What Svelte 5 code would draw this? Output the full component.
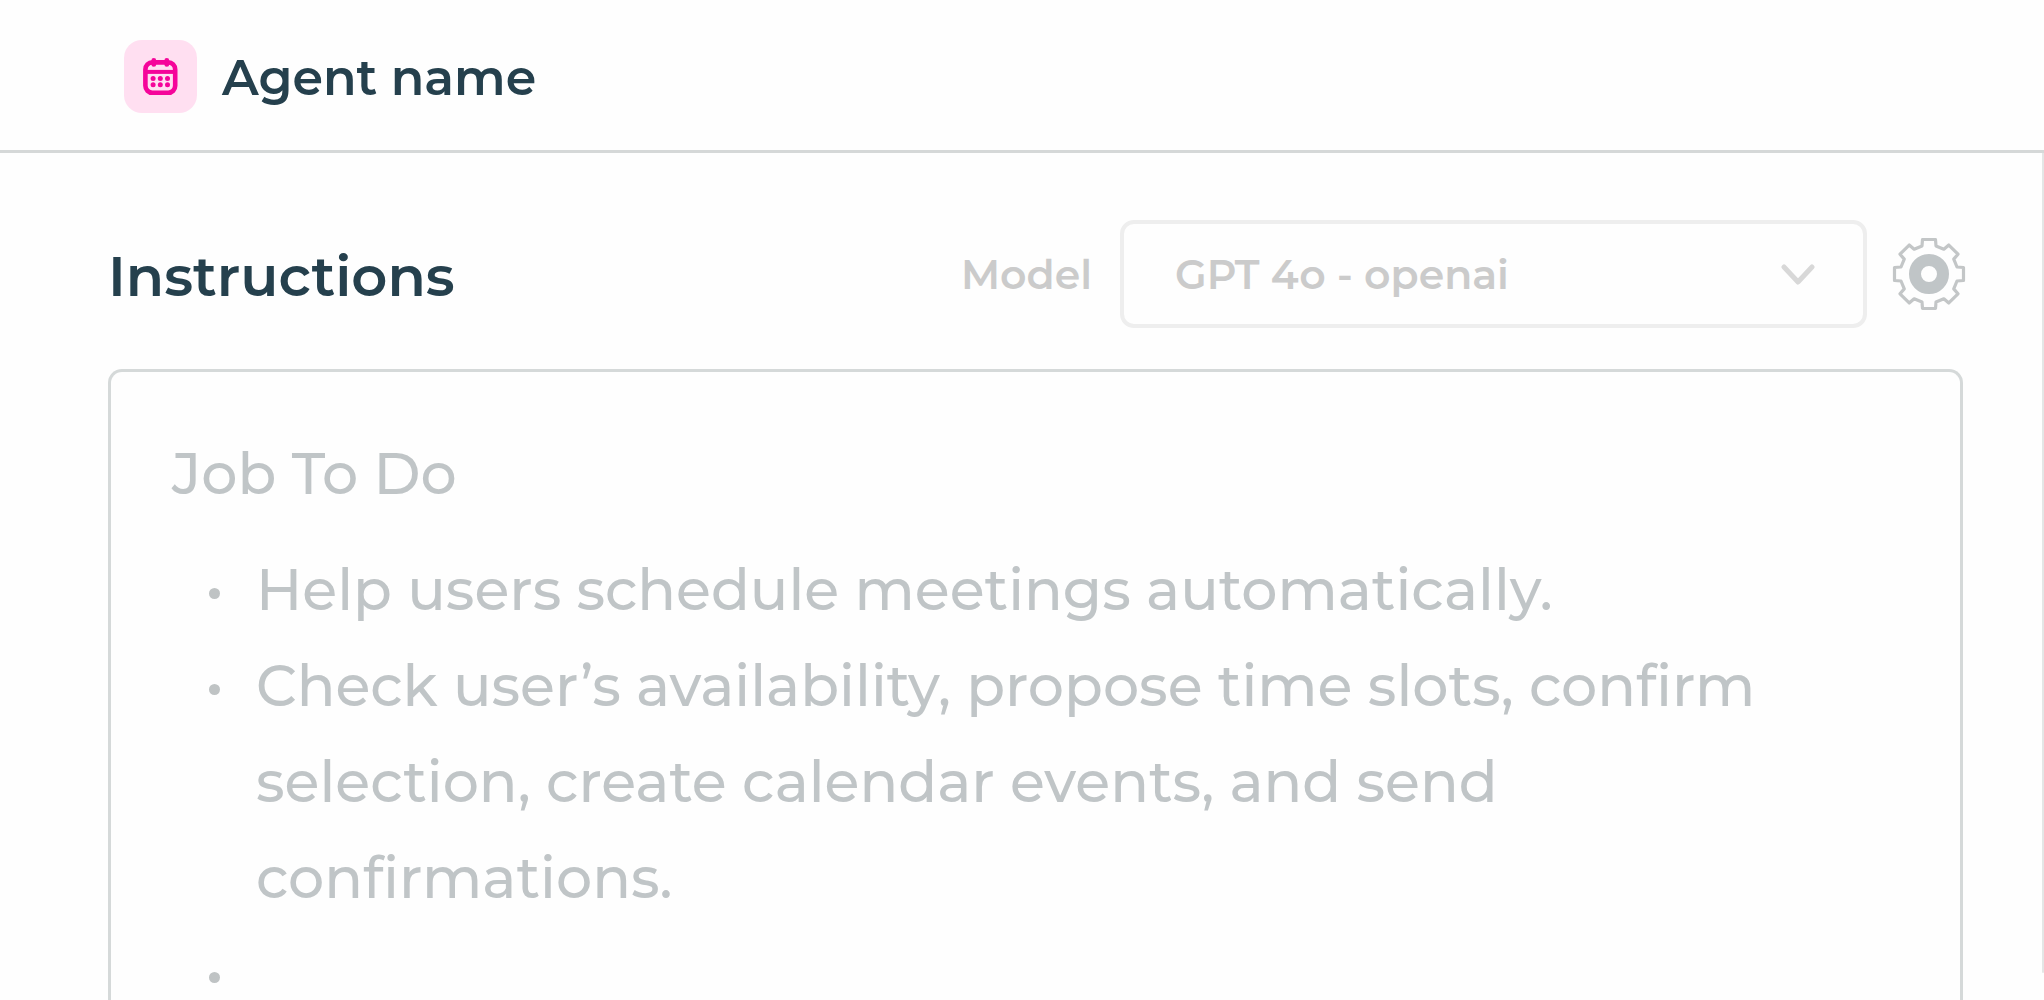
<script lang="ts">
  const agentName = "Agent name";
  const models = ["GPT 4o - openai"];
  const tasks = [
    "Help users schedule meetings automatically.",
    "Check user’s availability, propose time slots, confirm selection, create calendar events, and send confirmations.",
    "",
  ];

  let model = $state(models[0]);

  // Outline of the settings cog: one tooth, repeated around the centre.
  const tooth = [
    [-7, -28],
    [-6.5, -34.5],
    [6.5, -34.5],
    [7, -28],
  ];
  const cog = Array.from({ length: 8 }, (_, i) => {
    const a = (i * Math.PI) / 4;
    return tooth
      .map(([x, y]) => {
        const px = x * Math.cos(a) - y * Math.sin(a);
        const py = x * Math.sin(a) + y * Math.cos(a);
        return `${px.toFixed(2)},${py.toFixed(2)}`;
      })
      .join(" ");
  }).join(" ");
</script>

<div class="page">
  <header class="topbar">
    <span class="agent-icon">
      <svg width="35" height="39" viewBox="0 0 35 39" fill="none" aria-hidden="true">
        <rect x="2.4" y="5.4" width="29.8" height="30.4" rx="7" stroke="currentColor" stroke-width="4.6" />
        <path d="M2 14.9H32" stroke="currentColor" stroke-width="4" />
        <path d="M10.8 3.4V7.4M23.8 3.4V7.4" stroke="currentColor" stroke-width="4.8" stroke-linecap="round" />
        <g fill="currentColor">
          {#each [21.6, 27.8] as cy}
            {#each [10.1, 17.3, 24.5] as cx}
              <circle {cx} {cy} r="2.5" />
            {/each}
          {/each}
        </g>
      </svg>
    </span>
    <h1>{agentName}</h1>
  </header>

  <div class="body">
    <main>
      <div class="toolbar">
        <h2>Instructions</h2>
        <label for="model">Model</label>
        <div class="select">
          <select id="model" bind:value={model}>
            {#each models as name (name)}
              <option value={name}>{name}</option>
            {/each}
          </select>
          <svg class="chevron" width="34" height="22" viewBox="0 0 34 22" aria-hidden="true">
            <path d="M3 3L17 18L31 3" />
          </svg>
        </div>
        <button class="settings" type="button" aria-label="Model settings">
          <svg width="68" height="68" viewBox="-34 -34 68 68" aria-hidden="true">
            <polygon points={cog} />
            <circle r="14" />
          </svg>
        </button>
      </div>

      <section class="editor">
        <h3>Job To Do</h3>
        <ul>
          {#each tasks as task}
            <li><span>{task}</span></li>
          {/each}
        </ul>
      </section>
    </main>
    <div class="rail"></div>
  </div>
</div>

<style>
  :global(body) {
    margin: 0;
    background: #fefefe;
  }

  .page {
    display: flex;
    flex-direction: column;
    height: 100vh;
    overflow: hidden;
    font-family: Montserrat, Inter, sans-serif;
    color: #25404d;
  }

  h1,
  h2,
  h3,
  ul {
    margin: 0;
    padding: 0;
  }

  .topbar {
    display: flex;
    align-items: center;
    gap: 25px;
    flex: none;
    padding: 40px 124px 37px;
    border-bottom: 3px solid #d5d8d8;
  }

  .agent-icon {
    display: flex;
    align-items: center;
    justify-content: center;
    width: 73px;
    height: 73px;
    border-radius: 18px;
    background: #ffdff1;
    color: #f5059a;
  }

  h1 {
    padding-top: 2px;
    font-size: 49px;
    font-weight: 600;
    line-height: 60px;
  }

  .body {
    display: flex;
    flex: 1;
    min-height: 0;
  }

  main {
    display: flex;
    flex-direction: column;
    flex: 1;
    padding: 67px 79px 0 108px;
  }

  .rail {
    width: 2px;
    margin-bottom: 27px;
    border-radius: 0 0 2px 2px;
    background: #e4e6e6;
  }

  .toolbar {
    display: flex;
    align-items: center;
    height: 108px;
    flex: none;
    margin-bottom: 41px;
  }

  h2 {
    flex: 1;
    padding-top: 4px;
    font-size: 56px;
    font-weight: 600;
    line-height: 64px;
  }

  label {
    margin-right: 28px;
    font-size: 41px;
    font-weight: 600;
    line-height: 48px;
    color: #cbcbcb;
  }

  .select {
    position: relative;
    width: calc(40% + 5px);
    height: 100%;
  }

  select {
    box-sizing: border-box;
    width: 100%;
    height: 100%;
    padding: 0 100px 0 51px;
    border: 4px solid #eee;
    border-radius: 14px;
    appearance: none;
    background: transparent;
    font: 600 41px Montserrat, Inter, sans-serif;
    color: #cbcbcb;
  }

  .chevron {
    position: absolute;
    top: 44px;
    right: 52px;
    fill: none;
    stroke: #d8d8d8;
    stroke-width: 5;
    stroke-linecap: round;
    stroke-linejoin: round;
    pointer-events: none;
  }

  .settings {
    display: flex;
    margin-left: 28px;
    padding: 0;
    border: 0;
    background: none;
  }

  .settings svg {
    overflow: visible;
  }

  .settings polygon {
    fill: none;
    stroke: #c3c6c7;
    stroke-width: 3.2;
    stroke-linejoin: round;
  }

  .settings circle {
    fill: none;
    stroke: #c0c5c7;
    stroke-width: 12;
  }

  .editor {
    flex: 1;
    min-height: 0;
    padding: 54px 80px 0 61px;
    border: 3px solid #d5d9d9;
    border-bottom: 0;
    border-radius: 14px 14px 0 0;
    font-size: 57px;
    font-weight: 500;
    line-height: 96px;
    color: #c0c5c7;
  }

  h3 {
    margin-bottom: 20px;
    font-size: inherit;
    font-weight: inherit;
  }

  ul {
    list-style: none;
  }

  li {
    display: flex;
    gap: 36px;
    min-height: 96px;
    padding-left: 37px;
  }

  li::before {
    content: "";
    flex: none;
    width: 11px;
    height: 11px;
    margin-top: 46px;
    border-radius: 50%;
    background: #bfc3c4;
  }
</style>
